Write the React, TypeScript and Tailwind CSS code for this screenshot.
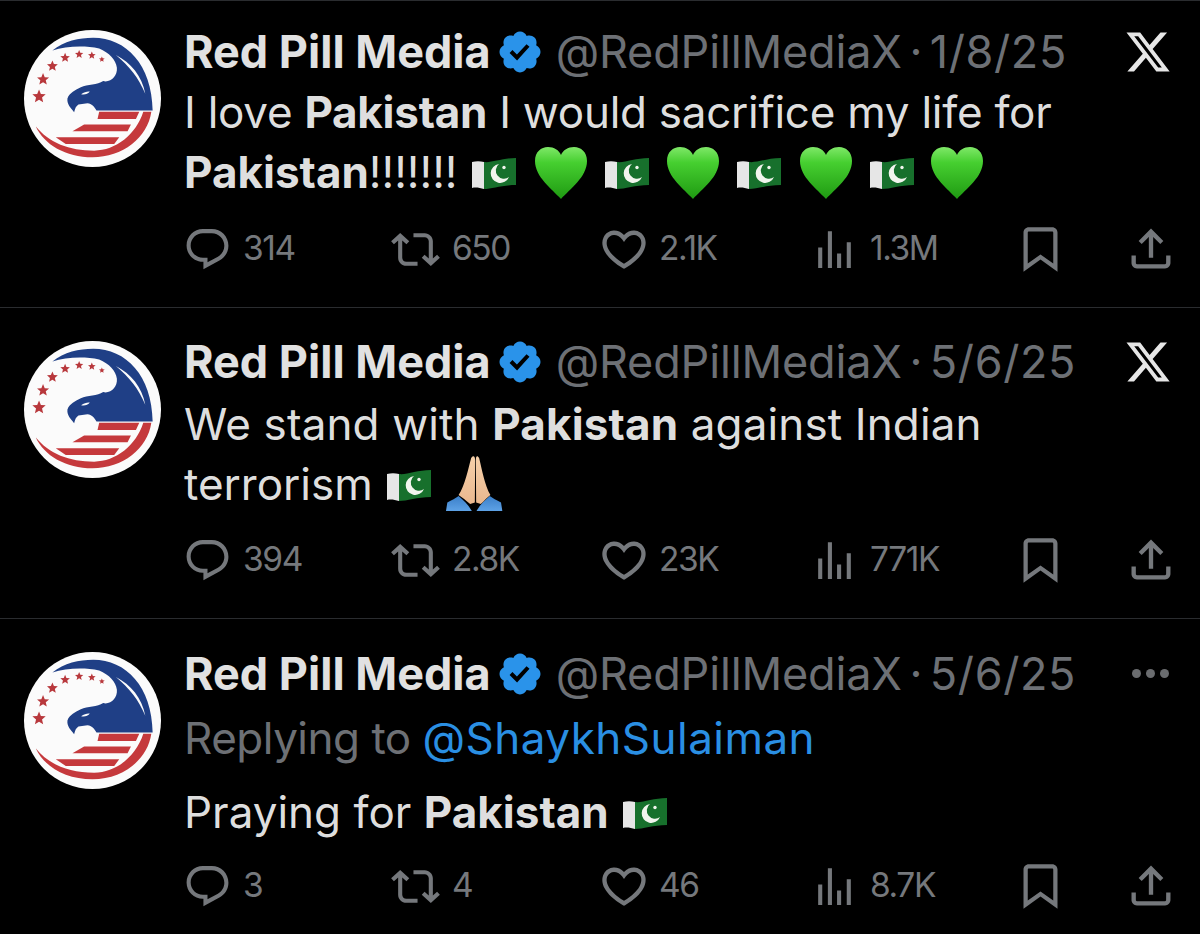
import type { ReactNode } from 'react'

const iconPaths = {
  reply:
    'M1.751 10c0-4.42 3.584-8 8.005-8h4.366c4.49 0 8.129 3.64 8.129 8.13 0 2.96-1.607 5.68-4.196 7.11l-8.054 4.46v-3.69h-.067c-4.49.1-8.183-3.51-8.183-8.01zm8.005-6c-3.317 0-6.005 2.69-6.005 6 0 3.37 2.77 6.08 6.138 6.01l.351-.01h1.761v2.3l5.087-2.81c1.951-1.08 3.163-3.13 3.163-5.36 0-3.39-2.744-6.13-6.129-6.13H9.756z',
  retweet:
    'M4.5 3.88l4.432 4.14-1.364 1.46L5.5 7.55V16c0 1.1.896 2 2 2H13v2H7.5c-2.209 0-4-1.79-4-4V7.55L1.432 9.48.068 8.02 4.5 3.88zM16.5 6H11V4h5.5c2.209 0 4 1.79 4 4v8.45l2.068-1.93 1.364 1.46-4.432 4.14-4.432-4.14 1.364-1.46 2.068 1.93V8c0-1.1-.896-2-2-2z',
  like: 'M16.697 5.5c-1.222-.06-2.679.51-3.89 2.16l-.805 1.09-.806-1.09C9.984 6.01 8.526 5.44 7.304 5.5c-1.243.07-2.349.78-2.91 1.91-.552 1.12-.633 2.78.479 4.82 1.074 1.97 3.257 4.27 7.129 6.61 3.87-2.34 6.052-4.64 7.126-6.61 1.111-2.04 1.03-3.7.477-4.82-.561-1.13-1.666-1.84-2.908-1.91zm4.187 7.69c-1.351 2.48-4.001 5.12-8.379 7.67l-.503.3-.504-.3c-4.379-2.55-7.029-5.19-8.382-7.67-1.36-2.5-1.41-4.86-.514-6.67.887-1.79 2.647-2.91 4.601-3.01 1.651-.09 3.368.56 4.798 2.01 1.429-1.45 3.146-2.1 4.796-2.01 1.954.1 3.714 1.22 4.601 3.01.896 1.81.846 4.17-.514 6.67z',
  views: 'M8.75 21V3h2v18h-2zM18 21V8.5h2V21h-2zM4 21l.004-10h2L6 21H4zm9.248 0v-7h2v7h-2z',
  bookmark:
    'M4 4.5C4 3.12 5.119 2 6.5 2h11C18.881 2 20 3.12 20 4.5v18.44l-8-5.71-8 5.71V4.5zM6.5 4c-.276 0-.5.22-.5.5v14.56l6-4.29 6 4.29V4.5c0-.28-.224-.5-.5-.5h-11z',
  share:
    'M12 2.59l5.7 5.7-1.41 1.42L13 6.41V16h-2V6.41l-3.3 3.3-1.41-1.42L12 2.59zM21 15l-.02 3.51c0 1.38-1.12 2.49-2.5 2.49H5.5C4.11 21 3 19.88 3 18.5V15h2v3.5c0 .28.22.5.5.5h12.98c.28 0 .5-.22.5-.5L19 15h2z',
  verified:
    'M22.25 12c0-1.43-.88-2.67-2.19-3.34.46-1.39.2-2.9-.81-3.91s-2.52-1.27-3.91-.81c-.66-1.31-1.91-2.19-3.34-2.19s-2.67.88-3.33 2.19c-1.4-.46-2.91-.2-3.92.81s-1.26 2.52-.8 3.91c-1.31.67-2.2 1.91-2.2 3.34s.89 2.67 2.2 3.34c-.46 1.39-.21 2.9.8 3.91s2.52 1.26 3.91.81c.67 1.31 1.91 2.19 3.34 2.19s2.68-.88 3.34-2.19c1.39.45 2.9.2 3.91-.81s1.27-2.52.81-3.91c1.31-.67 2.19-1.91 2.19-3.34zm-11.71 4.2L6.8 12.46l1.41-1.42 2.26 2.26 4.8-5.23 1.47 1.36-6.2 6.77z',
  x: 'M18.244 2.25h3.308l-7.227 8.26 8.502 11.24H16.17l-5.214-6.817L4.99 21.75H1.68l7.73-8.835L1.254 2.25H8.08l4.713 6.231zm-1.161 17.52h1.833L7.084 4.126H5.117z',
}

function Icon({ name, className }: { name: keyof typeof iconPaths; className: string }) {
  return (
    <svg viewBox="0 0 24 24" className={className} fill="currentColor">
      <path d={iconPaths[name]} />
    </svg>
  )
}

function starPoints(cx: number, cy: number, r: number) {
  const pts: string[] = []
  for (let i = 0; i < 10; i++) {
    const rad = i % 2 === 0 ? r : r * 0.45
    const a = (Math.PI / 5) * i - Math.PI / 2
    pts.push(`${cx + rad * Math.cos(a)},${cy + rad * Math.sin(a)}`)
  }
  return pts.join(' ')
}

const stars = [
  [60, 216, 21],
  [72, 165, 19],
  [100, 125, 17],
  [138, 100, 15],
  [180, 90, 13],
  [218, 93, 12],
  [248, 105, 9],
]

function Logo() {
  return (
    <svg viewBox="15 17 410 410" className="h-[137px] w-[137px] shrink-0">
      <circle cx="220" cy="222" r="205" fill="#fbfbfb" />
      <path
        d="M100 78 C135 50 180 40 222 40 C320 40 398 120 400 258 L232 258 C225 245 218 238 205 236 L178 240 C170 245 168 252 165 263 C155 250 143 240 145 222 C150 205 170 195 185 188 C205 180 235 182 252 170 C275 175 295 155 293 130 C290 105 270 85 240 72 C195 62 140 65 100 78 Z"
        fill="#1f3f86"
      />
      <path d="M290 92 C335 115 368 155 378 208 C358 160 330 125 290 92 Z" fill="#fbfbfb" />
      <path d="M186 209 C195 202 205 200 212 201 C207 208 195 212 186 209 Z" fill="#fbfbfb" />
      <path d="M240 262 L360 262 L350 283 L235 283 Z" fill="#c5393c" />
      <path d="M195 300 L335 300 L325 320 L160 320 Z" fill="#c5393c" />
      <path d="M110 338 L300 338 L285 358 L140 358 Z" fill="#c5393c" />
      <path
        d="M396 262 C385 340 310 398 220 398 C140 398 75 360 50 305 C90 355 150 378 225 378 C290 378 350 330 372 262 Z"
        fill="#c5393c"
      />
      {stars.map(([x, y, r]) => (
        <polygon key={x} points={starPoints(x, y, r)} fill="#b8383c" />
      ))}
    </svg>
  )
}

function Flag({ className = '' }: { className?: string }) {
  return (
    <svg viewBox="0 0 44 31" className={`inline-block h-[31px] w-[44px] align-[-1px] ${className}`}>
      <path d="M0 4 C4 3 8 3 12 4 L12 31 C8 30 4 29 0 30 Z" fill="#e6e6e6" />
      <path d="M12 4 C20 5 30 0 44 0 L44 27 C30 27 20 31 12 31 Z" fill="#17702c" />
      <path d="M27 6 A9.5 9.5 0 1 0 37 19 A8 8 0 1 1 27 6 Z" fill="#f2f5ee" />
      <circle cx="32" cy="9.5" r="1.7" fill="#f2f5ee" />
    </svg>
  )
}

function Heart({ className = '' }: { className?: string }) {
  return (
    <svg viewBox="0 0 52 52" className={`inline-block h-[52px] w-[52px] align-[-11px] ${className}`}>
      <defs>
        <linearGradient id="heartFill" x1="0" y1="0" x2="0" y2="1">
          <stop offset="0" stopColor="#7fe868" />
          <stop offset="0.3" stopColor="#46cf30" />
          <stop offset="1" stopColor="#1f9a12" />
        </linearGradient>
      </defs>
      <path
        d="M26 52 C17 42 0 30 0 14 C0 5 6 0 13 0 C19 0 24 3 26 8 C28 3 33 0 39 0 C46 0 52 5 52 14 C52 30 35 42 26 52 Z"
        fill="url(#heartFill)"
      />
    </svg>
  )
}

function PrayingHands() {
  return (
    <svg viewBox="225 40 175 175" className="ml-[14px] inline-block h-[58px] w-[58px] align-[-12px]">
      <defs>
        <linearGradient id="sleeve" x1="0" y1="0" x2="0" y2="1">
          <stop offset="0" stopColor="#3b7fc9" />
          <stop offset="1" stopColor="#5ea2e6" />
        </linearGradient>
        <linearGradient id="skin" x1="0" y1="0" x2="0" y2="1">
          <stop offset="0" stopColor="#f6d0a9" />
          <stop offset="1" stopColor="#e9b88f" />
        </linearGradient>
      </defs>
      <path d="M228 212 L232 186 C245 180 258 173 266 167 C282 180 296 195 306 212 Z" fill="url(#sleeve)" />
      <path d="M398 212 L394 186 C381 180 368 173 360 167 C344 180 330 195 320 212 Z" fill="url(#sleeve)" />
      <path
        d="M304 52 C310 43 316 46 316 60 L315 186 L301 191 C288 180 277 172 266 164 C285 135 295 85 304 52 Z"
        fill="url(#skin)"
      />
      <path
        d="M328 52 C322 43 318 46 318 60 L319 186 L333 191 C345 180 352 172 362 164 C345 135 336 85 328 52 Z"
        fill="url(#skin)"
      />
    </svg>
  )
}

function Stat(props: {
  icon: keyof typeof iconPaths
  count: string
  className: string
  iconClass?: string
  gap: string
}) {
  return (
    <div className={`flex items-center ${props.gap} ${props.className}`}>
      <Icon name={props.icon} className={`shrink-0 ${props.iconClass ?? 'h-[49px] w-[49px]'}`} />
      <span className="text-[33.5px] leading-none tracking-[-1.4px]">{props.count}</span>
    </div>
  )
}

function Tweet(props: {
  date: string
  topClass: string
  avatarClass: string
  corner: ReactNode
  children: ReactNode
  statsClass: string
  stats: [string, string, string, string]
}) {
  return (
    <article className={`flex gap-[23px] border-t border-[#2a2c2f] pl-6 ${props.topClass}`}>
      <div className={props.avatarClass}>
        <Logo />
      </div>
      <div className="min-w-0 flex-1">
        <div className="flex h-[60px] items-center justify-between pr-[28px] text-[45px] leading-[60px]">
          <div className="flex items-center whitespace-nowrap">
            <span className="font-bold text-[#e1e1e1]">Red Pill Media</span>
            <Icon name="verified" className="ml-[5px] h-[48px] w-[48px] text-[#2a93ea]" />
            <span className="ml-[12px] tracking-[-0.15px] text-[#6d7075]">@RedPillMediaX</span>
            <span className="w-[28px] text-center text-[#6d7075]">·</span>
            <span className="tracking-[0.6px] text-[#6d7075]">{props.date}</span>
          </div>
          {props.corner}
        </div>
        {props.children}
        <div className={`-ml-[1px] flex text-[#75787c] ${props.statsClass}`}>
          <Stat icon="reply" count={props.stats[0]} gap="gap-[11px]" className="w-[209px]" />
          <Stat icon="retweet" count={props.stats[1]} gap="gap-[12px]" className="w-[207px] -ml-[1px]" />
          <Stat
            icon="like"
            count={props.stats[2]}
            gap="gap-[9px]"
            iconClass="h-[52px] w-[52px]"
            className="w-[212px]"
          />
          <Stat icon="views" count={props.stats[3]} gap="gap-[11px]" className="w-[205px]" />
          <Icon name="bookmark" className="h-[51px] w-[51px]" />
          <Icon name="share" className="ml-[59px] h-[52px] w-[52px]" />
        </div>
      </div>
    </article>
  )
}

const xMark = <Icon name="x" className="h-[48px] w-[48px] text-[#e6e6e6]" />
const dots = (
  <div className="mb-[2px] flex gap-[5px] pr-[3px]">
    <span className="h-[9px] w-[9px] rounded-full bg-[#6a6c6f]" />
    <span className="h-[9px] w-[9px] rounded-full bg-[#6a6c6f]" />
    <span className="h-[9px] w-[9px] rounded-full bg-[#6a6c6f]" />
  </div>
)

const body = 'text-[44px] leading-[60px] text-[#dedede] whitespace-nowrap'

export default function App() {
  return (
    <div className="h-[934px] w-[1200px] overflow-hidden bg-black font-['Inter','Liberation_Sans',sans-serif]">
      <Tweet
        date="1/8/25"
        topClass="h-[307px] pt-[21px]"
        avatarClass="pt-[8px]"
        corner={xMark}
        statsClass="mt-[21px]"
        stats={['314', '650', '2.1K', '1.3M']}
      >
        <div className={`h-[60px] tracking-[-0.27px] ${body}`}>
          I love <b>Pakistan</b> I would sacrifice my life for
        </div>
        <div className={`h-[60px] ${body}`}>
          <b>Pakistan</b>!!!!!!!
          <Flag className="ml-[15px]" />
          <Heart className="ml-[19px]" />
          <Flag className="ml-[18px]" />
          <Heart className="ml-[18px]" />
          <Flag className="ml-[18px]" />
          <Heart className="ml-[19px]" />
          <Flag className="ml-[18px]" />
          <Heart className="ml-[17px]" />
        </div>
      </Tweet>
      <Tweet
        date="5/6/25"
        topClass="h-[311px] pt-[24px]"
        avatarClass="pt-[9px]"
        corner={xMark}
        statsClass="mt-[20px]"
        stats={['394', '2.8K', '23K', '771K']}
      >
        <div className={`mt-[2px] h-[60px] tracking-[0.13px] ${body}`}>
          We stand with <b>Pakistan</b> against Indian
        </div>
        <div className={`h-[60px] ${body}`}>
          terrorism
          <Flag className="ml-[14px]" />
          <PrayingHands />
        </div>
      </Tweet>
      <Tweet
        date="5/6/25"
        topClass="h-[316px] pt-[25px]"
        avatarClass="pt-[8px]"
        corner={dots}
        statsClass="mt-[18px]"
        stats={['3', '4', '46', '8.7K']}
      >
        <div className="mt-[4px] h-[60px] whitespace-nowrap text-[44px] leading-[60px] text-[#6d7075]">
          <span className="tracking-[-0.5px]">Replying to </span>
          <span className="tracking-[0.47px] text-[#2a8fe3]">@ShaykhSulaiman</span>
        </div>
        <div className={`mt-[14px] h-[60px] ${body}`}>
          Praying for <b>Pakistan</b>
          <Flag className="ml-[14px]" />
        </div>
      </Tweet>
    </div>
  )
}
